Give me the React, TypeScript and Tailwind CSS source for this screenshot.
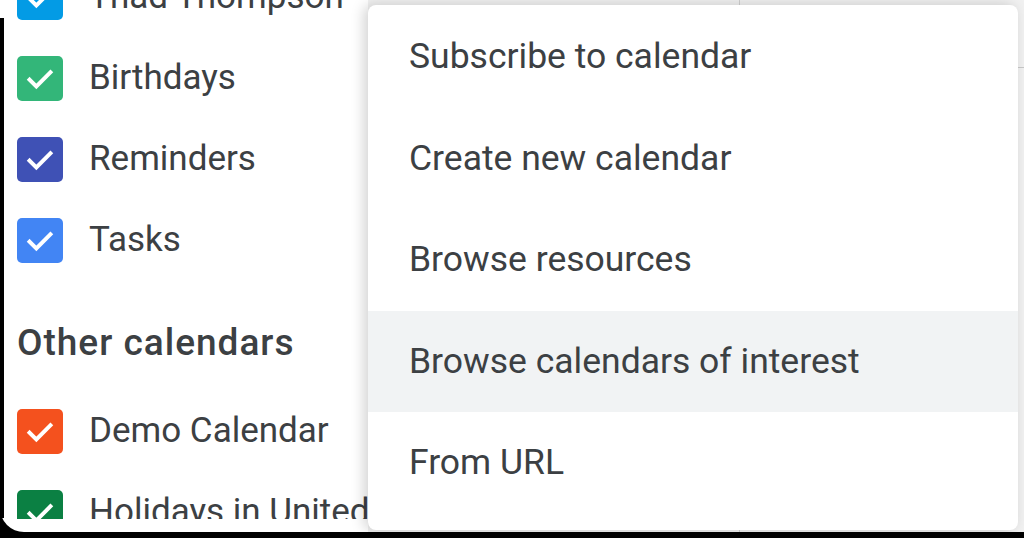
import React from "react";

const calendars = [
  { name: "Thad Thompson", color: "bg-[#039be5]" },
  { name: "Birthdays", color: "bg-[#33b679]" },
  { name: "Reminders", color: "bg-[#3f51b5]" },
  { name: "Tasks", color: "bg-[#4285f4]" },
];

const others = [
  { name: "Demo Calendar", color: "bg-[#f4511e]" },
  { name: "Holidays in United States", color: "bg-[#0b8043]" },
];

const menuItems = [
  "Subscribe to calendar",
  "Create new calendar",
  "Browse resources",
  "Browse calendars of interest",
  "From URL",
];

const Check = ({ color }: { color: string }) => (
  <div className={`w-[46px] h-[45px] rounded-[5px] flex items-center justify-center shrink-0 ${color}`}>
    <svg viewBox="0 0 24 24" className="w-[38px] h-[38px]" fill="none">
      <path d="M5.4 12.4l4.3 4.3L18.6 7.8" stroke="#fff" strokeWidth="2.5" strokeLinecap="square" />
    </svg>
  </div>
);

const CalendarRow = ({ name, color }: { name: string; color: string }) => (
  <div className="h-[81px] flex items-center pl-[13px] whitespace-nowrap">
    <Check color={color} />
    <span className="ml-[26px] text-[35px] text-[#3c4043]">{name}</span>
  </div>
);

export default function App() {
  return (
    <div className="w-[1024px] h-[538px] bg-black flex flex-col overflow-hidden" style={{ fontFamily: "Roboto, 'Noto Sans', sans-serif" }}>
      <div className="flex-1 flex bg-white relative rounded-b-[24px]">
        {/* annotation frame line */}
        <div className="w-[4px] mt-[18px] mb-[14px] bg-black shrink-0" />

        {/* sidebar */}
        <div className="w-[364px] h-[519px] overflow-hidden shrink-0">
          <div className="mt-[-43px]">
            {calendars.map((c) => (
              <CalendarRow key={c.name} {...c} />
            ))}
            <div className="h-[110px] pt-[14px] flex items-center pl-[13px]">
              <span className="text-[37px] tracking-[1px] font-medium text-[#3c4043]">Other calendars</span>
            </div>
            {others.map((c) => (
              <CalendarRow key={c.name} {...c} />
            ))}
          </div>
        </div>

        {/* calendar grid behind the menu */}
        <div className="flex-1 bg-[#f1f1f1] flex">
          <div className="w-[372px] border-r border-[#d0d0d0]" />
          <div className="flex-1 flex flex-col">
            <div className="h-[68px] border-b border-[#c8c8c8]" />
          </div>
        </div>

        {/* dropdown menu */}
        <div className="absolute left-[368px] top-[5px] w-[650px] h-[525px] bg-white rounded-[8px] shadow-[-4px_0_14px_rgba(0,0,0,0.18)] pt-[1px] overflow-hidden">
          {menuItems.map((item, i) => (
            <div
              key={item}
              className={`h-[101.5px] flex items-center pl-[41px] text-[35.5px] text-[#3c4043] ${i === 3 ? "bg-[#f1f3f4]" : ""}`}
            >
              {item}
            </div>
          ))}
        </div>
      </div>
      <div className="h-[6px] shrink-0" />
    </div>
  );
}
